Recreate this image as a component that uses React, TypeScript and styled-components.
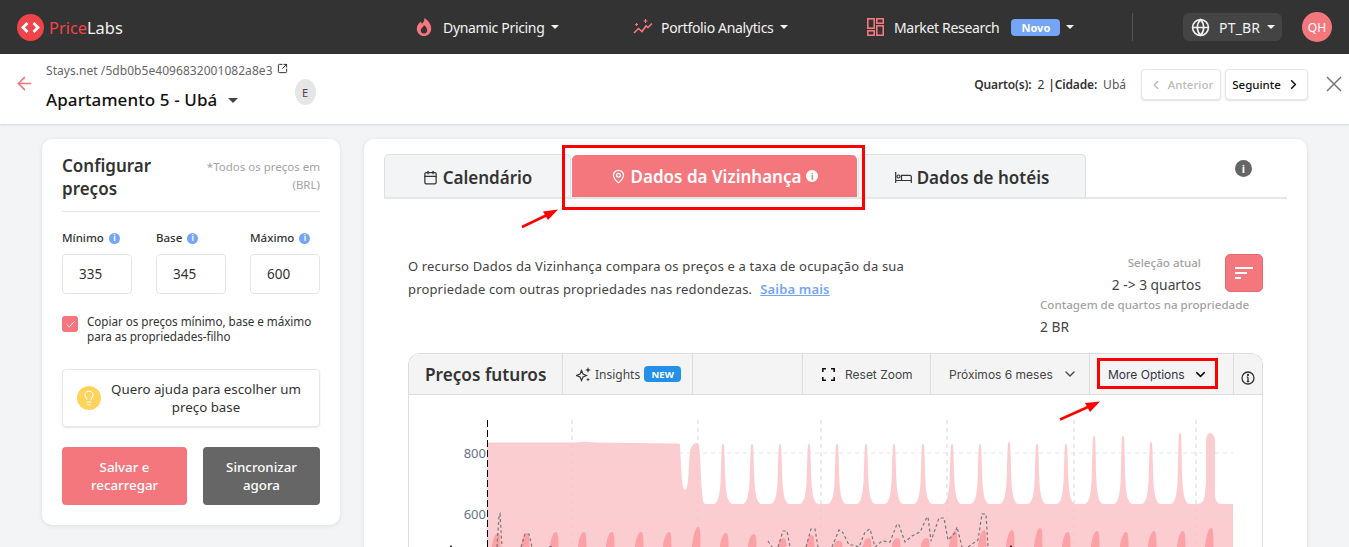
import React from "react";
import styled, { createGlobalStyle } from "styled-components";
import { Calendar, MapPin, Check, Lightbulb, ChevronDown, ChevronLeft, ChevronRight, Globe, ArrowLeft, SquareArrowOutUpRight } from "lucide-react";

const PLEX = `"Noto Sans", "Open Sans", sans-serif`;
const CORAL = "#f4777d";

const Global = createGlobalStyle`
  html, body { margin: 0; padding: 0; height: 547px; overflow: hidden; background: #f3f4f6; }
  body { font-family: ${PLEX}; color: #333; }
  * { box-sizing: border-box; }
`;

const Page = styled.div`position: relative; width: 1349px; height: 547px; overflow: hidden;`;

const TopBar = styled.header`
  height: 54px; background: #333; display: flex; align-items: center; padding-left: 17px; color: #fff;
`;
const Brand = styled.div`display: flex; align-items: center; gap: 5px; width: 399px; font-size: 16.4px; letter-spacing: 0;`;
const BrandRed = styled.span`color: #f0444a;`;
const BrandWhite = styled.span`color: #f2f2f2;`;
const NavItem = styled.div<{ $w: number }>`
  display: flex; align-items: center; width: ${p => p.$w}px; font-size: 14px; color: #f2f2f2; letter-spacing: -0.33px; white-space: nowrap;
`;
const NavIcon = styled.span<{ $w: number }>`display: inline-flex; width: ${p => p.$w}px; flex: none;`;
const Caret = styled.span<{ $ml: number; $c?: string; $s?: number }>`
  margin-left: ${p => p.$ml}px; width: 0; height: 0; flex: none;
  border-left: ${p => p.$s ?? 4}px solid transparent; border-right: ${p => p.$s ?? 4}px solid transparent;
  border-top: ${p => p.$s ?? 4}px solid ${p => p.$c ?? "#f2f2f2"};
`;
const NovoBadge = styled.span`
  margin-left: 12px; width: 49px; height: 17px; border-radius: 4px; background: #74a5f7; color: #fff;
  font-size: 11px; font-weight: 700; display: flex; align-items: center; justify-content: center; letter-spacing: 0;
`;
const NavDivider = styled.div`width: 1px; height: 28px; background: #555; margin-left: 0;`;
const LangPill = styled.div`
  margin-left: 50px; width: 99px; height: 28px; border-radius: 6px; background: #444; display: flex; align-items: center;
  padding-left: 8px; gap: 9px; font-size: 14px; color: #f2f2f2; letter-spacing: .2px;
`;
const Avatar = styled.div`
  margin-left: 20px; width: 30px; height: 30px; border-radius: 50%; background: ${CORAL}; color: #fff; font-size: 12px;
  display: flex; align-items: center; justify-content: center;
`;

const SubBar = styled.div`
  height: 70px; background: #fff; display: flex; position: relative; box-shadow: 0 1px 2px rgba(0,0,0,.12);
  padding: 0 7px 0 15px;
`;
const BackCell = styled.div`width: 31px; color: ${CORAL}; padding-top: 19px; display: flex; margin-left: -1px;`;
const PropInfo = styled.div`display: flex; flex-direction: column; padding-top: 9px; margin-left: 1px;`;
const PropPath = styled.div`font-size: 12px; color: #666; display: flex; line-height: 16px; gap: 4px; letter-spacing: .05px;`;
const PropTitle = styled.div`
  margin-top: 10px; font-size: 17px; font-weight: 500; color: #111; display: flex; align-items: center; line-height: 22px; letter-spacing: .1px;
`;
const EBadge = styled.div`
  margin: 25px 0 0 7px; width: 21px; height: 26px; border-radius: 50%; background: #e6e6e6; color: #444; font-size: 11px;
  display: flex; align-items: center; justify-content: center;
`;
const SubRight = styled.div`margin-left: auto; display: flex; align-items: flex-start; padding-top: 15px;`;
const Stats = styled.div`font-size: 12px; color: #333; line-height: 31px; margin-right: 15px; white-space: nowrap; display: flex;`;
const StatLabel = styled.b`font-weight: 600; letter-spacing: -.15px;`;
const StatRooms = styled.span`margin: 0 4px 0 6px;`;
const StatCity = styled.span`color: #555; margin-left: 6px;`;
const PageBtn = styled.button<{ $off?: boolean; $w: number }>`
  width: ${p => p.$w}px; height: 31px; margin-right: 4px; background: #fff; border: 1px solid #e8e8e8; border-radius: 4px;
  box-shadow: 0 1px 2px rgba(0,0,0,.12); font: 500 11.5px ${PLEX}; color: ${p => (p.$off ? "#bbb" : "#111")};
  display: flex; align-items: center; justify-content: center; gap: 5px; padding: 0;
`;
const CloseCell = styled.div`margin: 0 0 0 14px; display: flex; padding-top: 7px;`;

const Main = styled.main`display: flex; align-items: flex-start; padding: 15px 0 0 42px; gap: 24px;`;

const SideCard = styled.aside`
  width: 298px; height: 386px; flex: none; background: #fff; border-radius: 10px; box-shadow: 0 1px 4px rgba(0,0,0,.1);
  padding: 15px 20px 20px; display: flex; flex-direction: column;
`;
const SideHead = styled.div`display: flex; justify-content: space-between; padding-bottom: 11px; border-bottom: 1px solid #e6e6e6;`;
const SideTitle = styled.h2`margin: 0; font-size: 17px; font-weight: 600; line-height: 23px; color: #333; width: 110px;`;
const SideNote = styled.div`width: 125px; text-align: right; font-size: 11.5px; color: #a3a3a3; line-height: 18px; padding-top: 4px; letter-spacing: 0;`;
const PriceRow = styled.div`display: grid; grid-template-columns: 70px 70px 70px; justify-content: space-between; margin-top: 18px;`;
const PriceField = styled.div`display: flex; flex-direction: column; gap: 8px;`;
const PriceLabel = styled.div`display: flex; align-items: center; gap: 5px; font-size: 11.5px; font-weight: 500; line-height: 16px; white-space: nowrap; color: #333;`;
const InfoDot = styled.span`
  width: 11px; height: 11px; border-radius: 50%; background: #74a5f7; color: #fff; font-size: 8px; font-weight: 700; flex: none;
  display: inline-flex; align-items: center; justify-content: center;
`;
const PriceInput = styled.div`
  height: 40px; border: 1px solid #e6e6e6; border-radius: 4px; padding-left: 16px; display: flex; align-items: center; font-size: 13.5px; color: #333;
`;
const CopyRow = styled.div`display: flex; gap: 9px; margin-top: 20px;`;
const CheckBox = styled.span`
  width: 16px; height: 16px; margin-top: 2px; border-radius: 3px; background: ${CORAL}; color: #fff; display: flex; align-items: center; justify-content: center; flex: none;
`;
const CopyText = styled.div`font-size: 11.7px; line-height: 15px; color: #333; letter-spacing: -.05px;`;
const HelpBox = styled.div`
  margin-top: 25px; height: 58px; border: 1px solid #e6e6e6; border-radius: 4px; box-shadow: 0 1px 2px rgba(0,0,0,.1);
  display: flex; align-items: center; padding-left: 14px; gap: 8px;
`;
const BulbCircle = styled.span`
  width: 24px; height: 24px; border-radius: 50%; background: #ffd35c; color: #fff; display: flex; align-items: center; justify-content: center; flex: none;
`;
const HelpText = styled.div`font-size: 13.3px; line-height: 18px; text-align: center; color: #333; width: 194px; flex: none;`;
const ActionRow = styled.div`display: grid; grid-template-columns: 125px 117px; justify-content: space-between; margin-top: 20px;`;
const ActionBtn = styled.button<{ $bg: string }>`
  height: 58px; border: none; border-radius: 4px; background: ${p => p.$bg}; color: #fff; font: 500 13.3px/18px ${PLEX}; padding: 0 14px;
`;

const ContentCard = styled.section`
  width: 943px; height: 420px; flex: none; background: #fff; border-radius: 10px 10px 0 0; box-shadow: 0 1px 4px rgba(0,0,0,.1);
  padding: 15px 20px 0; display: flex; flex-direction: column;
`;
const TabBar = styled.div`display: flex; height: 45px; border-bottom: 2px solid #e6e6e6; position: relative; padding-right: 0; width: 903px;`;
const Tab = styled.div<{ $w: number; $active?: boolean }>`
  width: ${p => p.$w}px; height: ${p => (p.$active ? 42 : 43)}px; margin-top: ${p => (p.$active ? 1 : 0)}px;
  background: ${p => (p.$active ? CORAL : "#f3f4f6")}; border: ${p => (p.$active ? "none" : "1px solid #e0e0e0")};
  ${p => (p.$active ? "" : "border-bottom: none;")}
  border-radius: 5px 5px 0 0; color: ${p => (p.$active ? "#fff" : "#333")};
  font-size: 17px; font-weight: 600; display: flex; align-items: center; justify-content: center; gap: 5px; flex: none;
  margin-right: 1px; white-space: nowrap; padding-top: ${p => (p.$active ? 0 : 2)}px;
`;
const TabInfo = styled.span`
  width: 12px; height: 12px; border-radius: 50%; background: #fff; color: ${CORAL}; font-size: 9px; font-weight: 700;
  display: inline-flex; align-items: center; justify-content: center; margin-left: 0;
`;
const GreyInfo = styled.span`
  margin: 6px 0 0 148px; width: 17px; height: 17px; border-radius: 50%; background: #666; color: #fff; font-size: 11px; font-weight: 700;
  display: flex; align-items: center; justify-content: center; flex: none;
`;
const Intro = styled.div`display: flex; justify-content: space-between; padding: 55px 24px 0; `;
const IntroText = styled.p`margin: 0; width: 540px; font-size: 13px; line-height: 23px; color: #444; padding-top: 1px; letter-spacing: .16px;`;
const LearnMore = styled.a`color: #74a5f7; font-weight: 600; text-decoration: underline; margin-left: 8px;`;
const RoomPanel = styled.div`width: 223px; display: flex; flex-direction: column;`;
const RoomTop = styled.div`display: flex; justify-content: flex-end; gap: 24px; height: 42px;`;
const RoomCurrent = styled.div`text-align: right; display: flex; flex-direction: column; gap: 5px;`;
const MutedLabel = styled.div`font-size: 11.6px; line-height: 17px; color: #a3a3a3; font-weight: 500; white-space: nowrap;`;
const RoomValue = styled.div`font-size: 13.8px; line-height: 18px; color: #444;`;
const FilterBtn = styled.div`
  width: 38px; height: 38px; border-radius: 5px; background: ${CORAL}; border: 1px solid #ea6a70; color: #fff; display: flex; align-items: center; justify-content: center;
`;
const RoomCount = styled.div`display: flex; flex-direction: column; gap: 5px; `;
const ChartBox = styled.div`
  margin: 17px 24px 0; height: 194px; width: 855px; border: 1px solid #ddd; border-bottom: none; border-radius: 12px 12px 0 0; overflow: hidden;
`;
const ChartHead = styled.div`height: 41px; background: #f4f4f4; border-bottom: 1px solid #ddd; display: flex; align-items: stretch;`;
const HeadCell = styled.div<{ $w: number; $last?: boolean }>`
  width: ${p => p.$w}px; flex: none; display: flex; align-items: center; font-family: Inter, sans-serif; font-size: 12px; color: #444;
  border-right: ${p => (p.$last ? "none" : "1px solid #ddd")}; white-space: nowrap;
`;
const ChartTitle = styled(HeadCell)`font-family: ${PLEX}; font-size: 17.2px; font-weight: 600; color: #333; padding-left: 16px;`;
const InsightCell = styled(HeadCell)`padding-left: 13px; gap: 4px; font-family: ${PLEX}; font-size: 12px;`;
const NewBadge = styled.span`
  background: #2490ea; color: #fff; font-size: 9.5px; font-weight: 700; width: 37px; height: 16px; border-radius: 4px; display: flex; align-items: center; justify-content: center;
`;
const ResetCell = styled(HeadCell)`padding-left: 19px; gap: 10px;`;
const RangeCell = styled(HeadCell)`padding-left: 18px; gap: 9px;`;
const MoreCell = styled(HeadCell)`padding-left: 18px; gap: 8px; color: #334;`;
const InfoCell = styled(HeadCell)`justify-content: center; padding-top: 7px; color: #333;`;
const ChartSvg = styled.svg`display: block;`;
const AxisLabel = styled.text`font-family: ${PLEX}; font-size: 13px; fill: #66738a;`;

const RedBox = styled.div<{ $l: number; $t: number; $w: number; $h: number }>`
  position: absolute; left: ${p => p.$l}px; top: ${p => p.$t}px; width: ${p => p.$w}px; height: ${p => p.$h}px;
  border: 3px solid #f00; pointer-events: none;
`;
const ArrowSvg = styled.svg`position: absolute; left: 0; top: 0; pointer-events: none;`;

const FlameIcon = () => (
  <svg width="16" height="18" viewBox="0 0 16 18">
    <path fill={CORAL} d="M8.2 0c.6 3-1 4.3-2.3 5.8C5.4 5 5 4.4 4.9 3.6 2.6 5.4.8 7.800.8 10.700.8 14.800 4 18 8 18s7.200-3.200 7.200-7.300C15.200 6.300 12.300 2.200 8.200 0zM8 15.500c-1.800 0-3.200-1.400-3.200-3.100C4.800 10.300 7 9.200 8.200 7.200c1.700 1.400 3 3.200 3 5.200 0 1.700-1.400 3.100-3.200 3.100z"/>
  </svg>
);
const TrendIcon = () => (
  <svg width="20" height="18" viewBox="0 0 20 18" fill="none" stroke={CORAL} strokeWidth="1.600">
    <path d="M1 15l4.500-4.500 3.500 3 4-5.500 2 1.500 4-4"/>
    <path d="M12.500 1v4M10.500 3h4M3.500 5v3M2 6.500h3" strokeWidth="1.200"/>
  </svg>
);
const GridIcon = () => (
  <svg width="17" height="18" viewBox="0 0 17 18" fill="none" stroke={CORAL} strokeWidth="1.600">
    <rect x=".8" y=".8" width="6.400" height="9.400" /><rect x="9.800" y=".8" width="6.400" height="4.400"/>
    <rect x=".8" y="12.800" width="6.400" height="4.400"/><rect x="9.800" y="7.800" width="6.400" height="9.400"/>
  </svg>
);
const Sparkles = () => (
  <svg width="15" height="15" viewBox="0 0 15 15" fill="#333">
    <path d="M5.500 3.500L7 7l3.500 1.500L7 10l-1.500 3.500L4 10 .5 8.500 4 7z" fill="none" stroke="#333" strokeWidth="1.200"/>
    <path d="M12 0l.8 2.200L15 3l-2.200.8L12 6l-.8-2.200L9 3l2.200-.8zM12 10.500l.6 1.400 1.400.6-1.400.6-.6 1.400-.6-1.400-1.400-.6 1.400-.6z"/>
  </svg>
);
const ScanIcon = () => (
  <svg width="13" height="13" viewBox="0 0 13 13" fill="none" stroke="#111" strokeWidth="1.600">
    <path d="M.8 4V.8H4M9 .8h3.200V4M12.200 9v3.200H9M4 12.200H.8V9"/>
  </svg>
);
const SortIcon = () => (
  <svg width="18" height="13" viewBox="0 0 18 13" fill="#fff">
    <rect x="0" y="0" width="18" height="2"/><rect x="0" y="5" width="12" height="2"/><rect x="0" y="10" width="6" height="2"/>
  </svg>
);
const CircleInfo = () => (
  <svg width="14" height="14" viewBox="0 0 14 14" fill="none" stroke="#333" strokeWidth="1.300">
    <circle cx="7" cy="7" r="6"/><path d="M7 6.200V10.500M5.800 10.500h2.400M5.800 6.200H7" /><circle cx="7" cy="4" r=".5" fill="#333"/>
  </svg>
);
const HotelBed = () => (
  <svg width="17" height="13" viewBox="0 0 17 13" fill="none" stroke="#333" strokeWidth="1.200">
    <path d="M.7 1v11M.7 9.500h15.600V12M16.300 9.500V5.800a1.500 1.500 0 0 0-1.500-1.500H6.500v5.200"/>
    <circle cx="3.500" cy="5.500" r="1.500"/>
  </svg>
);
const CloseIcon = () => (
  <svg width="16" height="16" viewBox="0 0 16 16" fill="none" stroke="#777" strokeWidth="1.500">
    <path d="M1 1l14 14M15 1L1 15"/>
  </svg>
);

const BASE = 504;
const spikes: [number, number][] = [
  [723,443],[752,443],[780,443],[809,443],[837,443],[866,443],[894,443],[923,443],[952,443],[980,443],[1009,441],[1037,443],[1066,443],[1094,435],[1123,435],[1151,441],[1180,432],
];
const spikePath = spikes.map(([x, y]) =>
  `L${x - 9},${BASE} C${x - 5},${BASE - 1} ${x - 3},${BASE - 10} ${x - 2.400},${BASE - 24} C${x - 1.900},${BASE - 38} ${x - 1.600},${y + 10} ${x - 1.100},${y + 3} Q${x},${y - 2} ${x + 1.100},${y + 3} C${x + 1.600},${y + 10} ${x + 1.900},${BASE - 38} ${x + 2.400},${BASE - 24} C${x + 3},${BASE - 10} ${x + 5},${BASE - 1} ${x + 9},${BASE}`
).join(" ");
const lightPath = `M487,547 L487,442.500 L575,442.500 Q585,441 595,442.500 L630,443 L678,443.500 L680,444 C681,470 682,490 685,490 C689,490 688,470 690,452 C691,445 694,443 697,443 C701,443 700,470 702,490 C702.500,500 703,504 706,504 ${spikePath} L1196,504 C1204,504 1205,500 1206,480 L1206,440 Q1207,433 1210,433 Q1214,433 1215,440 L1215,495 Q1215,504 1222,504 L1233,504 L1233,547 Z`;

const bumps: [number, number][] = [
  [497,533],[526,533],[555,532],[583,532],[611,532],[640,532],[668,532],[697,527],[725,533],[753,534],[783,538],[811,535],[839,541],[868,538],[897,538],[926,538],[954,531],[983,530],[1011,530],[1039,528],[1067,532],[1096,531],[1125,532],[1153,531],[1182,531],[1210,528],
];
const bumpPath = bumps.map(([x, y]) => `M${x - 5},547 C${x - 4.500},540 ${x - 2},${y} ${x + 1},${y} C${x + 3},${y} ${x + 3.500},${y + 4} ${x + 3.500},547 Z`).join(" ");

const dashPts = "M497,547 L499,516 L500,514 L502,547 M521,547 L525,534 L529,534 L532,547 M549,547 L552,546 M768,541 L772,547 M778,547 L783,531 L787,531 L790,547 M806,547 L811,529 L815,529 L818,547 M832,547 L839,530 L842,531 L849,545 L853,545 L859,547 L865,532 L870,529 L873,540 L875,547 L882,541 L890,542 L897,524 L899,525 L905,542 L912,536 L920,532 L927,517 L928,517 L931,541 L939,518 L944,518 L948,540 L955,533 L957,527 L962,547 M968,547 L978,540 L982,514 L986,514 L988,547";

const verticals = [572, 698, 821, 947, 1074, 1196];

const Chart = () => (
  <ChartSvg width={853} height={153} viewBox="409 395 853 153">
    {verticals.map(x => <line key={x} x1={x} x2={x} y1={420} y2={547} stroke="#ddd" strokeDasharray="4 4"/>)}
    <path d={lightPath} fill="#fccdd0"/>
    {verticals.map(x => <line key={x} x1={x} x2={x} y1={420} y2={547} stroke="#000" strokeOpacity=".025" strokeDasharray="4 4"/>)}
    {[453, 514].map(y => <line key={y} x1={487} x2={1233} y1={y} y2={y} stroke="#ddd" strokeOpacity=".7" strokeDasharray="4 4"/>)}
    <path d={bumpPath} fill="#fca2a6"/>
    <path d={dashPts} fill="none" stroke="#777" strokeWidth="1.200" strokeDasharray="3 2.500"/>
    <line x1={487.500} x2={487.500} y1={420} y2={547} stroke="#000" strokeDasharray="7 3"/>
    <AxisLabel x={486} y={458} textAnchor="end">800</AxisLabel>
    <AxisLabel x={486} y={519} textAnchor="end">600</AxisLabel>
    <circle cx={1011} cy={546.500} r={1} fill="#111"/>
    <circle cx={451} cy={546.500} r={1} fill="#111"/>
  </ChartSvg>
);

const App = () => (
  <Page>
    <Global/>
    <TopBar>
      <Brand>
        <svg width="27" height="27" viewBox="0 0 27 27">
          <circle cx="13.500" cy="13.500" r="13.500" fill="#f0444a"/>
          <path d="M10.500 9l-4.500 4.500 4.500 4.500M16.500 9l4.500 4.500-4.500 4.500" fill="none" stroke="#fff" strokeWidth="2.800"/>
        </svg>
        <span><BrandRed>Price</BrandRed><BrandWhite>Labs</BrandWhite></span>
      </Brand>
      <NavItem $w={217}><NavIcon $w={27}><FlameIcon/></NavIcon>Dynamic Pricing<Caret $ml={7}/></NavItem>
      <NavItem $w={234}><NavIcon $w={28}><TrendIcon/></NavIcon>Portfolio Analytics<Caret $ml={7}/></NavItem>
      <NavItem $w={265}><NavIcon $w={27}><GridIcon/></NavIcon>Market Research<NovoBadge>Novo</NovoBadge><Caret $ml={6}/></NavItem>
      <NavDivider/>
      <LangPill><Globe size={19} strokeWidth={2}/>PT_BR<Caret $ml={-2}/></LangPill>
      <Avatar>QH</Avatar>
    </TopBar>

    <SubBar>
      <BackCell><ArrowLeft size={21} strokeWidth={1.800}/></BackCell>
      <PropInfo>
        <PropPath>Stays.net /5db0b5e4096832001082a8e3<SquareArrowOutUpRight size={11} color="#222"/></PropPath>
        <PropTitle>Apartamento 5 - Ubá<Caret $ml={11} $c="#444" $s={5}/></PropTitle>
      </PropInfo>
      <EBadge>E</EBadge>
      <SubRight>
        <Stats><StatLabel>Quarto(s):</StatLabel><StatRooms>2</StatRooms><StatLabel>|Cidade:</StatLabel><StatCity>Ubá</StatCity></Stats>
        <PageBtn $off $w={80}><ChevronLeft size={14} strokeWidth={2.500}/>Anterior</PageBtn>
        <PageBtn $w={83}>Seguinte<ChevronRight size={15} strokeWidth={2.500}/></PageBtn>
        <CloseCell><CloseIcon/></CloseCell>
      </SubRight>
    </SubBar>

    <Main>
      <SideCard>
        <SideHead>
          <SideTitle>Configurar preços</SideTitle>
          <SideNote>*Todos os preços em (BRL)</SideNote>
        </SideHead>
        <PriceRow>
          <PriceField><PriceLabel>Mínimo<InfoDot>i</InfoDot></PriceLabel><PriceInput>335</PriceInput></PriceField>
          <PriceField><PriceLabel>Base<InfoDot>i</InfoDot></PriceLabel><PriceInput>345</PriceInput></PriceField>
          <PriceField><PriceLabel>Máximo<InfoDot>i</InfoDot></PriceLabel><PriceInput>600</PriceInput></PriceField>
        </PriceRow>
        <CopyRow>
          <CheckBox><Check size={11} strokeWidth={2}/></CheckBox>
          <CopyText>Copiar os preços mínimo, base e máximo para as propriedades-filho</CopyText>
        </CopyRow>
        <HelpBox>
          <BulbCircle><Lightbulb size={16} strokeWidth={1.600}/></BulbCircle>
          <HelpText>Quero ajuda para escolher um preço base</HelpText>
        </HelpBox>
        <ActionRow>
          <ActionBtn $bg={CORAL}>Salvar e recarregar</ActionBtn>
          <ActionBtn $bg="#666">Sincronizar agora</ActionBtn>
        </ActionRow>
      </SideCard>

      <ContentCard>
        <TabBar>
          <Tab $w={187}><Calendar size={15}/>Calendário</Tab>
          <Tab $active $w={285}><MapPin size={15}/>Dados da Vizinhança<TabInfo>i</TabInfo></Tab>
          <Tab $w={228}><HotelBed/>Dados de hotéis</Tab>
          <GreyInfo>i</GreyInfo>
        </TabBar>
        <Intro>
          <IntroText>
            O recurso Dados da Vizinhança compara os preços e a taxa de ocupação da sua propriedade com outras propriedades nas redondezas.
            <LearnMore>Saiba mais</LearnMore>
          </IntroText>
          <RoomPanel>
            <RoomTop>
              <RoomCurrent>
                <MutedLabel>Seleção atual</MutedLabel>
                <RoomValue>2 -&gt; 3 quartos</RoomValue>
              </RoomCurrent>
              <FilterBtn><SortIcon/></FilterBtn>
            </RoomTop>
            <RoomCount>
              <MutedLabel>Contagem de quartos na propriedade</MutedLabel>
              <RoomValue>2 BR</RoomValue>
            </RoomCount>
          </RoomPanel>
        </Intro>
        <ChartBox>
          <ChartHead>
            <ChartTitle $w={154}>Preços futuros</ChartTitle>
            <InsightCell $w={130}><Sparkles/>Insights<NewBadge>NEW</NewBadge></InsightCell>
            <HeadCell $w={110}/>
            <ResetCell $w={128}><ScanIcon/>Reset Zoom</ResetCell>
            <RangeCell $w={159}>Próximos 6 meses<ChevronDown size={16}/></RangeCell>
            <MoreCell $w={144}>More Options<ChevronDown size={15} color="#111" strokeWidth={2.500}/></MoreCell>
            <InfoCell $w={28} $last><CircleInfo/></InfoCell>
          </ChartHead>
          <Chart/>
        </ChartBox>
      </ContentCard>
    </Main>

    <RedBox $l={562} $t={145} $w={303} $h={65}/>
    <RedBox $l={1097} $t={358} $w={121} $h={31}/>
    <ArrowSvg width={1349} height={547}>
      <path d="M522 227L546 215.500" stroke="#f00" strokeWidth="2.500"/>
      <path d="M558 209.500L543 211.500L548 220Z" fill="#f00"/>
      <path d="M1060 419.500L1088 407" stroke="#f00" strokeWidth="2.500"/>
      <path d="M1100 401.500L1085 403L1090 412Z" fill="#f00"/>
    </ArrowSvg>
  </Page>
);

export default App;
